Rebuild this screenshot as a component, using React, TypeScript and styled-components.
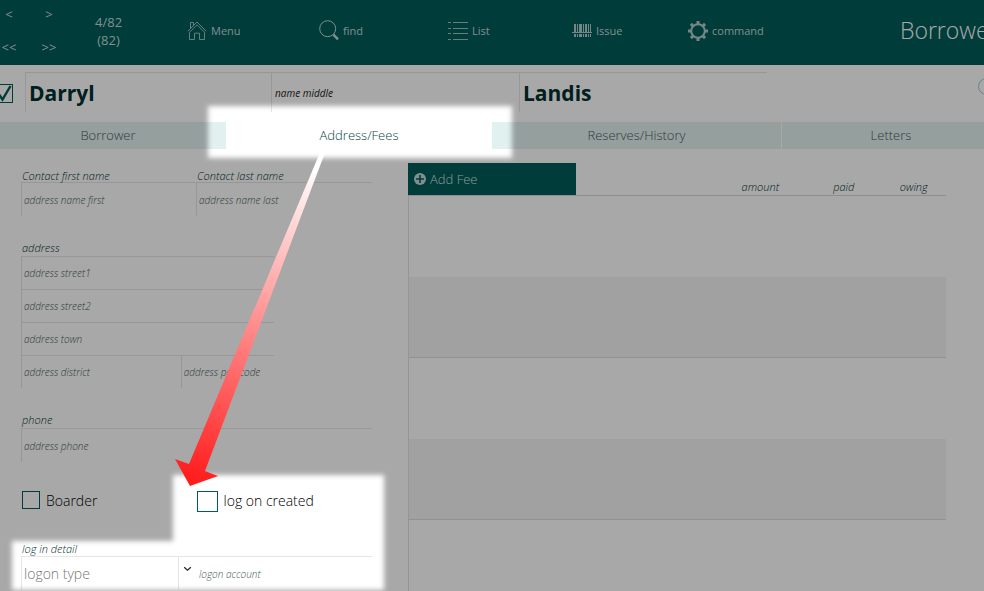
import React from "react";
import styled, { createGlobalStyle, css } from "styled-components";

const teal = "#005b59";
const rule = "#e6e6e6";

const GlobalStyle = createGlobalStyle`
  *, *::before, *::after { box-sizing: border-box; }
  body { margin: 0; overflow-x: hidden; background: #fff; }
  body, button, input, select { font-family: "Open Sans", "Noto Sans", sans-serif; }
`;

const Page = styled.div`
  position: relative;
  display: flex;
  flex-direction: column;
  min-height: 100vh;
  overflow: hidden;
`;

const Toolbar = styled.header`
  display: grid;
  grid-template-columns: 95fr 92fr 132fr 129fr 124fr 116fr 212fr 84fr;
  align-items: center;
  min-height: 65px;
  padding-bottom: 4px;
  background: ${teal};
  color: #c4d9d8;
`;

const Pager = styled.nav`
  display: grid;
  grid-template-columns: 18px 18px;
  column-gap: 22px;
  row-gap: 13px;
`;

const PagerButton = styled.button`
  padding: 0;
  border: 0;
  background: none;
  color: inherit;
  font-size: 13px;
  line-height: 20px;
  text-align: center;
`;

const Counter = styled.div`
  justify-self: start;
  font-size: 13px;
  line-height: 18px;
  text-align: center;
`;

const ToolButton = styled.button`
  display: flex;
  align-items: center;
  justify-self: start;
  gap: 4px;
  padding: 0;
  border: 0;
  background: none;
  color: inherit;
  font-size: 11px;
  line-height: 20px;
`;

const Title = styled.h1`
  min-width: 0;
  margin: 0;
  padding-bottom: 2px;
  overflow: hidden;
  color: #fff;
  font-size: 23px;
  font-weight: 300;
  line-height: 32px;
  white-space: nowrap;
`;

const NameRow = styled.div`
  display: flex;
  align-items: flex-start;
  margin-top: 7px;
`;

const TickBox = styled.span<{ $size: number }>`
  position: relative;
  display: inline-flex;
  flex: none;
  width: ${(p) => p.$size}px;
  height: ${(p) => p.$size}px;

  input {
    appearance: none;
    width: 100%;
    height: 100%;
    margin: 0;
    border: 1px solid ${teal};
  }

  svg {
    position: absolute;
    inset: 0;
    width: 100%;
    height: 100%;
    display: none;
    pointer-events: none;
  }

  input:checked + svg { display: block; }
`;

const ActiveBox = styled.div`
  display: flex;
  width: 25px;
  margin: 12px 0 0 -6px;
  flex: none;
`;

const NameFields = styled.div`
  display: grid;
  flex: 0 1 742px;
  grid-template-columns: 246fr 248fr 248fr;
  margin-left: 6px;
  border-top: 1px solid ${rule};
`;

const RoundOption = styled.input`
  appearance: none;
  flex: none;
  width: 17px;
  height: 17px;
  margin: 6px -11px 0 auto;
  border: 1px solid #9cc8c6;
  border-radius: 50%;
`;

const Cell = styled.input<{ $kind?: "name" | "middle"; $rule?: boolean }>`
  min-width: 0;
  width: 100%;
  height: 33px;
  padding: 0 2px;
  border: 0;
  border-left: 1px solid ${rule};
  ${(p) => p.$rule && css`border-top: 1px solid ${rule};`}
  border-radius: 0;
  background: none;
  color: #002f2d;
  font-size: 10px;
  font-style: italic;
  font-weight: 300;

  &::placeholder { color: #3f5a58; opacity: 1; }

  ${(p) => p.$kind && css`
    height: 39px;
    padding: 0 3px;
  `}
  ${(p) => p.$kind === "name" && css`
    font-size: 21px;
    font-style: normal;
    font-weight: 700;
  `}
  ${(p) => p.$kind === "middle" && css`
    font-weight: 400;
    &::placeholder { color: #222; }
  `}
`;

const Tabs = styled.div`
  display: grid;
  grid-template-columns: 226fr 266fr 289fr 203fr;
  margin-top: 10px;
`;

const Tab = styled.button<{ $shift?: string }>`
  height: 27px;
  padding: ${(p) => p.$shift ?? "0"};
  border: 0;
  background: #e1f1f0;
  color: #4c5958;
  font-size: 13px;
  font-weight: 300;
  line-height: 27px;
  text-align: center;

  &[aria-selected="true"] { background: #fff; color: #004846; }
  &:last-child { border-left: 1px solid #fff; }
`;

const Content = styled.main`
  display: grid;
  flex: 1;
  grid-template-columns: 408fr 576fr;
`;

const Details = styled.form`
  padding: 20px 36px 0 21px;
`;

const Group = styled.section<{ $space: number }>`
  margin-bottom: ${(p) => p.$space}px;
`;

const Label = styled.label<{ $gap?: number }>`
  display: block;
  padding-left: 1px;
  margin-bottom: ${(p) => p.$gap ?? 0}px;
  color: #002f2e;
  font-size: 11px;
  font-style: italic;
  font-weight: 300;
  line-height: 13px;
`;

const Pair = styled.div<{ $columns: string; $ruled?: boolean }>`
  display: grid;
  grid-template-columns: ${(p) => p.$columns};
  ${(p) => p.$ruled && css`border-top: 1px solid ${rule};`}
`;

const AddressLines = styled.div`
  display: flex;
  flex-direction: column;
  width: 72%;
`;

const Checks = styled.div`
  display: grid;
  grid-template-columns: 175fr 176fr;
  align-items: start;
  padding-left: 1px;
  margin-bottom: 30px;
`;

const CheckLabel = styled.label`
  display: flex;
  align-items: flex-start;
  gap: 6px;
  color: #000;
  font-size: 14px;
  font-weight: 300;
  line-height: 19px;
`;

const LogonRow = styled.div`
  display: grid;
  grid-template-columns: 175fr 176fr;
  border-top: 1px solid ${rule};
`;

const SelectBox = styled.div`
  display: grid;
  grid-template-columns: 1fr 17px;
  border-left: 1px solid ${rule};
`;

const LogonSelect = styled.select`
  appearance: none;
  min-width: 0;
  height: 32px;
  padding: 0 2px;
  border: 0;
  border-right: 1px solid ${rule};
  background: none;
  color: #777;
  font-size: 14px;
  font-weight: 300;
`;

const Caret = styled.svg`
  width: 9px;
  height: 6px;
  margin: 9px 0 0 4px;
`;

const PlainCell = styled(Cell)`
  border-left-color: transparent;
`;

const Fees = styled.section`
  display: flex;
  flex-direction: column;
  padding: 14px 38px 0 0;
`;

const FeeTable = styled.table`
  width: 100%;
  border-collapse: separate;
  border-spacing: 0;
  table-layout: fixed;

  th {
    padding: 14px 0 0;
    border-bottom: 1px solid #d8d8d8;
    color: #002f2e;
    font-size: 11px;
    font-style: italic;
    font-weight: 300;
    text-align: center;
  }
  th:first-child { padding: 0; text-align: left; }
  td { height: 81px; padding: 0; }
  td:first-child { border-left: 1px solid #e2e2e2; }
  tbody tr:nth-child(even) td { background: #f5f5f5; border-bottom: 1px solid #dcdcdc; }
`;

const AddFee = styled.button`
  display: flex;
  align-items: center;
  gap: 4px;
  width: 168px;
  height: 32px;
  padding: 0 6px;
  border: 0;
  background: ${teal};
  color: #d4e6e5;
  font-size: 13px;
  font-weight: 300;
`;

const TableTail = styled.div`
  flex: 1;
  border-left: 1px solid #e2e2e2;
`;

const Spotlight = styled.svg`
  position: absolute;
  inset: 0;
  width: 100%;
  height: 100%;
  pointer-events: none;
`;

const HomeIcon = () => (
  <svg width="20" height="21" viewBox="0 0 20 21" fill="none" stroke="currentColor" strokeWidth="1" opacity=".8" aria-hidden="true">
    <path d="M.8 11.2 10 2l9.2 9.2" />
    <path d="M2.5 12.3 10 4.8l7.5 7.5v7.2h-5v-6.3h-5v6.3h-5z" />
    <path d="M3.5 8.2V2.5h3v2.7" />
  </svg>
);

const FindIcon = () => (
  <svg width="20" height="21" viewBox="0 0 20 21" fill="none" stroke="currentColor" aria-hidden="true">
    <circle cx="8.7" cy="8.7" r="8" strokeWidth="1" />
    <path d="m14.4 14.6 4.6 4.8" strokeWidth="2.4" />
  </svg>
);

const ListIcon = () => (
  <svg width="20" height="20" viewBox="0 0 20 20" stroke="currentColor" opacity=".8" aria-hidden="true">
    <path d="M0 1.5h3M5 1.5h15M0 7.5h3M5 7.5h15M0 12.5h3M5 12.5h15M0 18.5h3M5 18.5h15" />
  </svg>
);

const BarcodeIcon = () => (
  <svg width="20" height="16" viewBox="0 0 20 16" fill="currentColor" opacity=".9" aria-hidden="true">
    <path d="M2 1h2v8H2zM5 1h1v8H5zM7 1h3v8H7zM11 1h1v8h-1zM13 1h2v8h-2zM16 1h1v8h-1zM18 1h1v8h-1zM0 9h20v1H0zM2 11h2v3H2zM5 11h1v3H5zM7 11h3v3H7zM11 11h1v3h-1zM13 11h2v3h-2zM16 11h1v3h-1zM18 11h1v3h-1z" />
  </svg>
);

const GearIcon = () => (
  <svg width="20" height="20" viewBox="0 0 20 20" fill="none" stroke="currentColor" opacity=".9" aria-hidden="true">
    <circle cx="10" cy="10" r="6.8" strokeWidth="2" />
    <path d="M10 0v3M10 17v3M0 10h3M17 10h3M2.9 2.9 5 5M15 15l2.1 2.1M17.1 2.9 15 5M5 15l-2.1 2.1" strokeWidth="3" />
  </svg>
);

const PlusIcon = () => (
  <svg width="12" height="12" viewBox="0 0 12 12" aria-hidden="true">
    <circle cx="6" cy="6" r="6" fill="#c4d9d8" />
    <path d="M6 2v8M2 6h8" stroke={teal} strokeWidth="1.6" />
  </svg>
);

const tools = [
  { text: "Menu", Icon: HomeIcon },
  { text: "find", Icon: FindIcon },
  { text: "List", Icon: ListIcon },
  { text: "Issue", Icon: BarcodeIcon },
  { text: "command", Icon: GearIcon },
];

const Tick = ({ id, size, checked }: { id: string; size: number; checked?: boolean }) => (
  <TickBox $size={size}>
    <input id={id} type="checkbox" defaultChecked={checked} aria-label={id} />
    <svg viewBox="0 0 19 19" fill="none" stroke={teal} strokeWidth="2.4" aria-hidden="true">
      <path d="m4 9 4.5 6.5L16.5 2" />
    </svg>
  </TickBox>
);

export default function App() {
  return (
    <>
      <GlobalStyle />
      <Page>
        <Toolbar>
          <Pager aria-label="Records">
            <PagerButton>&lt;</PagerButton>
            <PagerButton>&gt;</PagerButton>
            <PagerButton>&lt;&lt;</PagerButton>
            <PagerButton>&gt;&gt;</PagerButton>
          </Pager>
          <Counter>4/82<br />(82)</Counter>
          {tools.map(({ text, Icon }) => (
            <ToolButton key={text}><Icon />{text}</ToolButton>
          ))}
          <Title>Borrower</Title>
        </Toolbar>

        <NameRow>
          <ActiveBox><Tick id="active" size={19} checked /></ActiveBox>
          <NameFields>
            <Cell $kind="name" aria-label="name first" defaultValue="Darryl" />
            <Cell $kind="middle" aria-label="name middle" placeholder="name middle" />
            <Cell $kind="name" aria-label="name last" defaultValue="Landis" />
          </NameFields>
          <RoundOption type="radio" aria-label="option" />
        </NameRow>

        <Tabs role="tablist">
          <Tab role="tab" aria-selected="false" $shift="0 10px 0 0">Borrower</Tab>
          <Tab role="tab" aria-selected="true">Address/Fees</Tab>
          <Tab role="tab" aria-selected="false">Reserves/History</Tab>
          <Tab role="tab" aria-selected="false" $shift="0 0 0 16px">Letters</Tab>
        </Tabs>

        <Content>
          <Details>
            <Group $space={25}>
              <Pair $columns="175fr 176fr">
                <Label htmlFor="first">Contact first name</Label>
                <Label htmlFor="last">Contact last name</Label>
              </Pair>
              <Pair $columns="175fr 176fr" $ruled>
                <Cell id="first" placeholder="address name first" />
                <Cell id="last" placeholder="address name last" />
              </Pair>
            </Group>

            <Group $space={25}>
              <Label htmlFor="street1" $gap={2}>address</Label>
              <AddressLines>
                <Cell id="street1" $rule placeholder="address street1" />
                <Cell $rule aria-label="address street2" placeholder="address street2" />
                <Cell $rule aria-label="address town" placeholder="address town" />
                <Pair $columns="160fr 93fr">
                  <Cell $rule aria-label="address district" placeholder="address district" />
                  <Cell $rule aria-label="address postcode" placeholder="address postcode" />
                </Pair>
              </AddressLines>
            </Group>

            <Group $space={29}>
              <Label htmlFor="phone" $gap={2}>phone</Label>
              <Pair $columns="1fr" $ruled>
                <Cell id="phone" placeholder="address phone" />
              </Pair>
            </Group>

            <Checks>
              <CheckLabel><Tick id="Boarder" size={18} />Boarder</CheckLabel>
              <CheckLabel><Tick id="log on created" size={21} />log on created</CheckLabel>
            </Checks>

            <Label htmlFor="logon" $gap={1}>log in detail</Label>
            <LogonRow>
              <SelectBox>
                <LogonSelect id="logon"><option>logon type</option></LogonSelect>
                <Caret viewBox="0 0 9 6" fill="none" stroke="#222" strokeWidth="1.2" aria-hidden="true">
                  <path d="m1.2 1.2 3.3 3 3.3-3" />
                </Caret>
              </SelectBox>
              <PlainCell aria-label="logon account" placeholder="logon account" />
            </LogonRow>
          </Details>

          <Fees>
            <FeeTable>
              <colgroup>
                <col width="57%" /><col width="17%" /><col width="14%" /><col width="12%" />
              </colgroup>
              <thead>
                <tr>
                  <th><AddFee type="button"><PlusIcon />Add Fee</AddFee></th>
                  <th>amount</th>
                  <th>paid</th>
                  <th>owing</th>
                </tr>
              </thead>
              <tbody>
                {[1, 2, 3, 4].map((row) => (
                  <tr key={row}><td /><td /><td /><td /></tr>
                ))}
              </tbody>
            </FeeTable>
            <TableTail />
          </Fees>
        </Content>

        <Spotlight aria-hidden="true">
          <defs>
            <filter id="soften" x="-10%" y="-10%" width="120%" height="120%">
              <feGaussianBlur stdDeviation="2.5" />
            </filter>
            <mask id="holes" maskUnits="userSpaceOnUse" x="0" y="0" width="100%" height="100%">
              <rect width="100%" height="100%" fill="#fff" />
              <g filter="url(#soften)">
                <rect x="208" y="106" width="304" height="52" />
                <path d="M12 541H173V475H384V590H12Z" />
              </g>
            </mask>
            <linearGradient id="heat" gradientUnits="userSpaceOnUse" x1="310" y1="165" x2="190" y2="480">
              <stop offset="0" stopColor="#fff" />
              <stop offset="1" stopColor="#ff1c1c" />
            </linearGradient>
          </defs>
          <rect width="100%" height="100%" fill="#000" fillOpacity=".34" mask="url(#holes)" />
          <path d="M321 150h5L205 471l13 5-28 10-15-27 14 5Z" fill="url(#heat)" />
        </Spotlight>
      </Page>
    </>
  );
}
